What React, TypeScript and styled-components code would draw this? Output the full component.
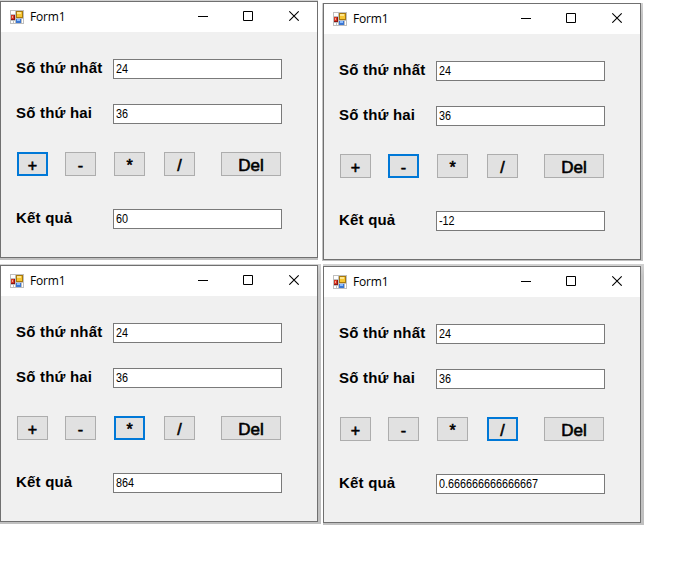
import React from "react";
import styled, { createGlobalStyle } from "styled-components";

const GlobalStyle = createGlobalStyle`
  * { box-sizing: border-box; }
  body { margin: 0; background: #fff; overflow: hidden; }
`;

const Desktop = styled.main`
  display: flex;
  align-items: flex-start;
  gap: 1px;
  width: 694px;
  height: 565px;
  font-family: "Liberation Sans", Arial, sans-serif;
  color: #000;
`;

const Column = styled.div<{ $top: number; $gap: number }>`
  display: flex;
  flex-direction: column;
  align-items: flex-start;
  gap: ${(p) => p.$gap}px;
  padding-top: ${(p) => p.$top}px;
`;

type Edges = { top: number; right: number; bottom: number; left: number; gutter?: number };

const Shadow = styled.div<{ $edges: Edges }>`
  margin-left: ${({ $edges: e }) => e.gutter ?? 0}px;
  padding: ${({ $edges: e }) => `${e.top}px ${e.right}px ${e.bottom}px ${e.left}px`};
  background: linear-gradient(#d2d2d2, #c4c4c4 12px, #c0c0c0);
`;

const Frame = styled.section`
  width: 318px;
  height: 257px;
  border: 1px solid #707070;
  background: #f0f0f0;
`;

const TitleBar = styled.header`
  display: flex;
  align-items: center;
  height: 30px;
  padding: 0 0 0 9px;
  background: #fff;
`;

const Title = styled.span`
  flex: 1;
  margin-left: 6px;
  font: 12px/16px "Open Sans", "Noto Sans", sans-serif;
  letter-spacing: -0.2px;
`;

const Caption = styled.div`
  display: flex;
  align-self: flex-start;
  width: 119px;
  padding-top: 8px;

  svg { display: block; flex: none; }
  svg + svg { margin-left: 34px; }
  svg:last-child { margin-left: 35px; }
`;

const Body = styled.div`
  padding: 27px 0 0 15px;
`;

const FieldRow = styled.label<{ $gap?: number }>`
  display: flex;
  align-items: flex-start;
  height: 20px;
  margin-top: ${(p) => p.$gap ?? 0}px;
`;

const Label = styled.span`
  width: 97px;
  flex: none;
  font-size: 15px;
  font-weight: 700;
  line-height: 17px;
  letter-spacing: 0.2px;
  white-space: nowrap;
`;

const Field = styled.div`
  width: 169px;
  height: 20px;
  padding-left: 2px;
  border: 1px solid #7a7a7a;
  background: #fff;
  font-size: 12px;
  line-height: 19px;
`;

const Value = styled.span`
  display: inline-block;
  transform: scaleX(0.9);
  transform-origin: left;
`;

const ButtonRow = styled.div`
  display: flex;
  height: 24px;
  margin: 28px 0 33px 1px;
`;

const Key = styled.button<{ $focused: boolean; $wide?: boolean; $gap: number }>`
  display: flex;
  align-items: flex-start;
  justify-content: center;
  width: ${(p) => (p.$wide ? 60 : 31)}px;
  height: 24px;
  margin: 0 0 0 ${(p) => p.$gap}px;
  padding: ${(p) => (p.$focused ? "3px 0 0" : "4px 1px 0")};
  border: ${(p) => (p.$focused ? "2px solid #0078d7" : "1px solid #adadad")};
  background: #e1e1e1;
  color: #000;
  font: ${(p) => (p.$wide ? 17 : 16)}px/18px "Liberation Sans", Arial, sans-serif;
  -webkit-text-stroke: 0.6px #000;
`;

function FormIcon() {
  return (
    <svg width="14" height="14" viewBox="0 0 14 14" shapeRendering="crispEdges">
      <path fill="#bfbfbf" d="M0 0h14v14H0z" />
      <path fill="#fff" d="M1 1h4v3H1zM1 11h2v2H1zM4 11h1v2H4zM12 9h1v4h-1z" />
      <path fill="#8c1511" d="M1 5h4v5H1z" />
      <path fill="#d83824" d="M1 5h3v4H1z" />
      <path fill="#f5a28c" d="M2 6h1v2H2z" />
      <path fill="#a8790d" d="M6 1h7v7H6z" />
      <path fill="#f7c633" d="M7 2h5v5H7z" />
      <path fill="#ffe68b" d="M7 2h4v2H7z" />
      <path fill="#3b76d2" d="M6 9h5v4H6z" />
      <path fill="#8cbdff" d="M7 9h3v2H7z" />
    </svg>
  );
}

const Minimize = () => (
  <svg width="11" height="11"><path d="M0 6.5h10" stroke="#000" /></svg>
);
const Maximize = () => (
  <svg width="11" height="11"><path d="M.5 1.5h9v9h-9z" fill="none" stroke="#000" /></svg>
);
const Close = () => (
  <svg width="11" height="11"><path d="M.3 1.3l9.4 9.4M9.7 1.3L.3 10.7" stroke="#000" strokeWidth="1.1" /></svg>
);

const keys = [
  { text: "+", gap: 0 },
  { text: "-", gap: 17 },
  { text: "*", gap: 18 },
  { text: "/", gap: 19 },
  { text: "Del", gap: 26, wide: true },
];

function Calculator({ active, result, edges }: { active: string; result: string; edges: Edges }) {
  return (
    <Shadow $edges={edges}>
      <Frame>
        <TitleBar>
          <FormIcon />
          <Title>Form1</Title>
          <Caption>
            <Minimize />
            <Maximize />
            <Close />
          </Caption>
        </TitleBar>
        <Body>
          <FieldRow>
            <Label>Số thứ nhất</Label>
            <Field><Value>24</Value></Field>
          </FieldRow>
          <FieldRow $gap={25}>
            <Label>Số thứ hai</Label>
            <Field><Value>36</Value></Field>
          </FieldRow>
          <ButtonRow>
            {keys.map((k) => (
              <Key key={k.text} $focused={k.text === active} $wide={k.wide} $gap={k.gap}>
                {k.text}
              </Key>
            ))}
          </ButtonRow>
          <FieldRow>
            <Label>Kết quả</Label>
            <Field><Value>{result}</Value></Field>
          </FieldRow>
        </Body>
      </Frame>
    </Shadow>
  );
}

export default function App() {
  return (
    <>
      <GlobalStyle />
      <Desktop>
        <Column $top={0} $gap={4}>
          <Calculator active="+" result="60" edges={{ top: 1, right: 0, bottom: 2, left: 0 }} />
          <Calculator active="*" result="864" edges={{ top: 1, right: 3, bottom: 2, left: 0 }} />
        </Column>
        <Column $top={3} $gap={3}>
          <Calculator active="-" result="-12" edges={{ top: 0, right: 2, bottom: 1, left: 1 }} />
          <Calculator active="/" result="0.666666666666667" edges={{ top: 2, right: 3, bottom: 2, left: 0, gutter: 1 }} />
        </Column>
      </Desktop>
    </>
  );
}
